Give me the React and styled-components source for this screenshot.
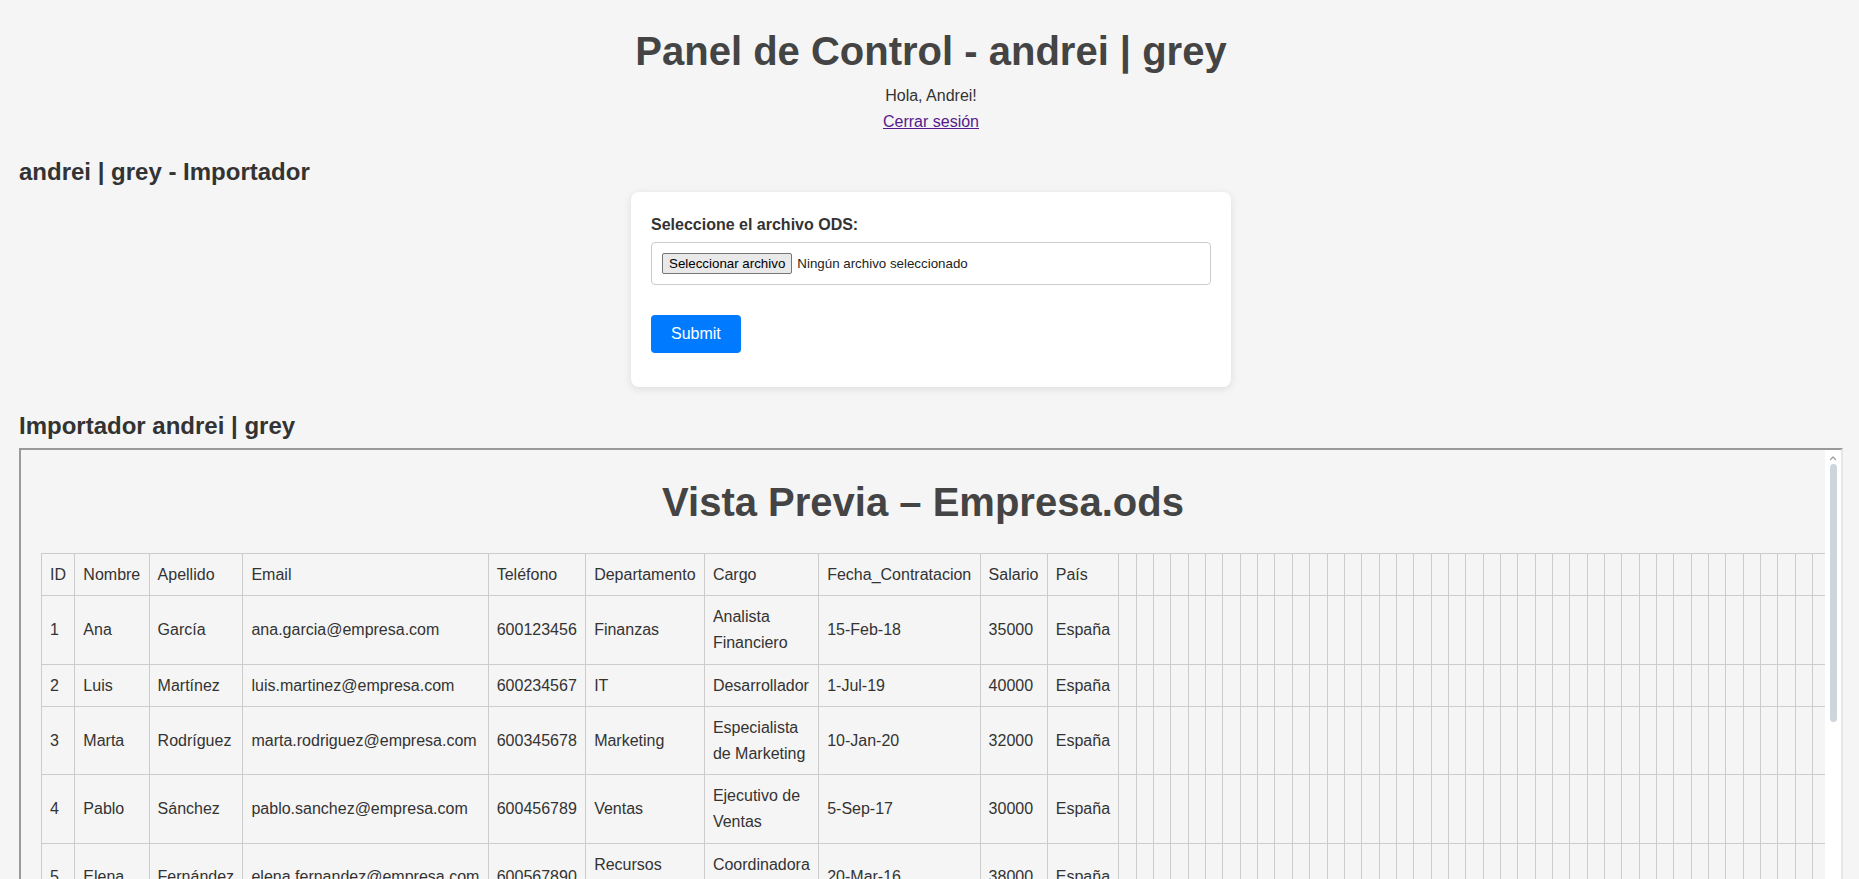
import React from "react";
import styled, { createGlobalStyle } from "styled-components";

const GlobalStyle = createGlobalStyle`
  html, body {
    margin: 0;
    padding: 0;
    height: 100%;
    overflow: hidden;
  }
  body {
    background: #f5f5f5;
    font-family: "Liberation Sans", Arial, sans-serif;
    font-size: 16px;
    line-height: 1.6;
    color: #333;
  }
  * { box-sizing: border-box; }
`;

const Page = styled.div`
  padding: 19px 16px 0 19px;
`;

const Header = styled.header`
  text-align: center;
  margin-bottom: 19px;
`;

const Title = styled.h1`
  margin: 0;
  font-size: 40px;
  font-weight: bold;
  line-height: 1.6;
  color: #444;
`;

const Line = styled.p`
  margin: 0;
  font-size: 16px;
`;

const Logout = styled.a`
  color: #551a8b;
  text-decoration: underline;
  cursor: pointer;
`;

const SectionTitle = styled.h2`
  margin: 0;
  font-size: 24px;
  font-weight: bold;
  line-height: 1.6;
  color: #333;
`;

const Card = styled.form`
  width: 600px;
  margin: 0 auto 20px;
  background: #fff;
  border-radius: 8px;
  padding: 20px 20px 34px;
  box-shadow: 0 2px 8px rgba(0, 0, 0, 0.1);
`;

const Label = styled.label`
  display: block;
  font-weight: bold;
  font-size: 16px;
  margin-bottom: 5px;
  color: #333;
`;

const FileField = styled.div`
  display: flex;
  align-items: center;
  background: #fff;
  border: 1px solid #ccc;
  border-radius: 4px;
  padding: 10px;
  margin-bottom: 30px;
  font-size: 13.333px;
  line-height: 1.6;
`;

const FileButton = styled.button`
  height: 21px;
  padding: 0 6px;
  margin: 0 5px 0 0;
  font-family: inherit;
  font-size: 13.333px;
  line-height: normal;
  color: #000;
  background: #e9e9e9;
  border: 1px solid #767676;
  border-radius: 2px;
`;

const FileName = styled.span`
  color: #222;
`;

const SubmitButton = styled.button`
  display: block;
  padding: 10px 20px;
  font-family: inherit;
  font-size: 16px;
  line-height: normal;
  color: #fff;
  background: #007bff;
  border: none;
  border-radius: 4px;
  cursor: pointer;
`;

const Frame = styled.div`
  width: 100%;
  height: 620px;
  margin-top: 2px;
  display: flex;
  background: #f5f5f5;
  border: 2px solid;
  border-color: #9a9a9a #e6e6e6 #e6e6e6 #9a9a9a;
`;

const Viewport = styled.div`
  flex: 1;
  min-width: 0;
  overflow: hidden;
  padding: 20px 20px 0;
`;

const PreviewTitle = styled.h1`
  margin: 0 0 19px;
  font-size: 40px;
  font-weight: bold;
  line-height: 1.6;
  text-align: center;
  color: #444;
`;

const Table = styled.table`
  border-collapse: collapse;
  width: 100%;
`;

const Cell = styled.td`
  border: 1px solid #ccc;
  padding: 8px 8.35px 8px 8px;
  text-align: left;
  vertical-align: middle;
  font-size: 16px;
  line-height: 1.6;
  color: #333;
`;

const ScrollTrack = styled.div`
  flex: none;
  width: 16px;
  background: #fff;
  display: flex;
  flex-direction: column;
  align-items: center;
  padding-top: 4px;
`;

const ScrollThumb = styled.div`
  width: 7px;
  height: 258px;
  margin-top: 2px;
  border-radius: 4px;
  background: #cdd6dd;
`;

const headers = [
  "ID",
  "Nombre",
  "Apellido",
  "Email",
  "Teléfono",
  "Departamento",
  "Cargo",
  "Fecha_Contratacion",
  "Salario",
  "País",
];

const rows = [
  ["1", "Ana", "García", "ana.garcia@empresa.com", "600123456", "Finanzas", "Analista Financiero", "15-Feb-18", "35000", "España"],
  ["2", "Luis", "Martínez", "luis.martinez@empresa.com", "600234567", "IT", "Desarrollador", "1-Jul-19", "40000", "España"],
  ["3", "Marta", "Rodríguez", "marta.rodriguez@empresa.com", "600345678", "Marketing", "Especialista de Marketing", "10-Jan-20", "32000", "España"],
  ["4", "Pablo", "Sánchez", "pablo.sanchez@empresa.com", "600456789", "Ventas", "Ejecutivo de Ventas", "5-Sep-17", "30000", "España"],
  ["5", "Elena", "Fernández", "elena.fernandez@empresa.com", "600567890", "Recursos Humanos", "Coordinadora de RRHH", "20-Mar-16", "38000", "España"],
];

const EMPTY_COLS = 50;

function TableRow({ cells }) {
  return (
    <tr>
      {cells.map((c, i) => (
        <Cell key={i}>{c}</Cell>
      ))}
      {Array.from({ length: EMPTY_COLS }).map((_, i) => (
        <Cell key={`e${i}`} />
      ))}
    </tr>
  );
}

function UpArrow() {
  return (
    <svg width="8" height="8" viewBox="0 0 8 8" aria-hidden="true">
      <polyline
        points="1.5,5.5 4,3 6.5,5.5"
        fill="none"
        stroke="#9a9a9a"
        strokeWidth="1.2"
        strokeLinecap="round"
        strokeLinejoin="round"
      />
    </svg>
  );
}

export default function App() {
  return (
    <>
      <GlobalStyle />
      <Page>
        <Header>
          <Title>Panel de Control - andrei | grey</Title>
          <Line>Hola, Andrei!</Line>
          <Line>
            <Logout href="#">Cerrar sesión</Logout>
          </Line>
        </Header>

        <SectionTitle>andrei | grey - Importador</SectionTitle>
        <Card onSubmit={(e) => e.preventDefault()}>
          <Label>Seleccione el archivo ODS:</Label>
          <FileField>
            <FileButton type="button">Seleccionar archivo</FileButton>
            <FileName>Ningún archivo seleccionado</FileName>
          </FileField>
          <SubmitButton type="submit">Submit</SubmitButton>
        </Card>

        <SectionTitle>Importador andrei | grey</SectionTitle>
        <Frame>
          <Viewport>
            <PreviewTitle>Vista Previa – Empresa.ods</PreviewTitle>
            <Table>
              <tbody>
                <TableRow cells={headers} />
                {rows.map((r) => (
                  <TableRow key={r[0]} cells={r} />
                ))}
              </tbody>
            </Table>
          </Viewport>
          <ScrollTrack>
            <UpArrow />
            <ScrollThumb />
          </ScrollTrack>
        </Frame>
      </Page>
    </>
  );
}
